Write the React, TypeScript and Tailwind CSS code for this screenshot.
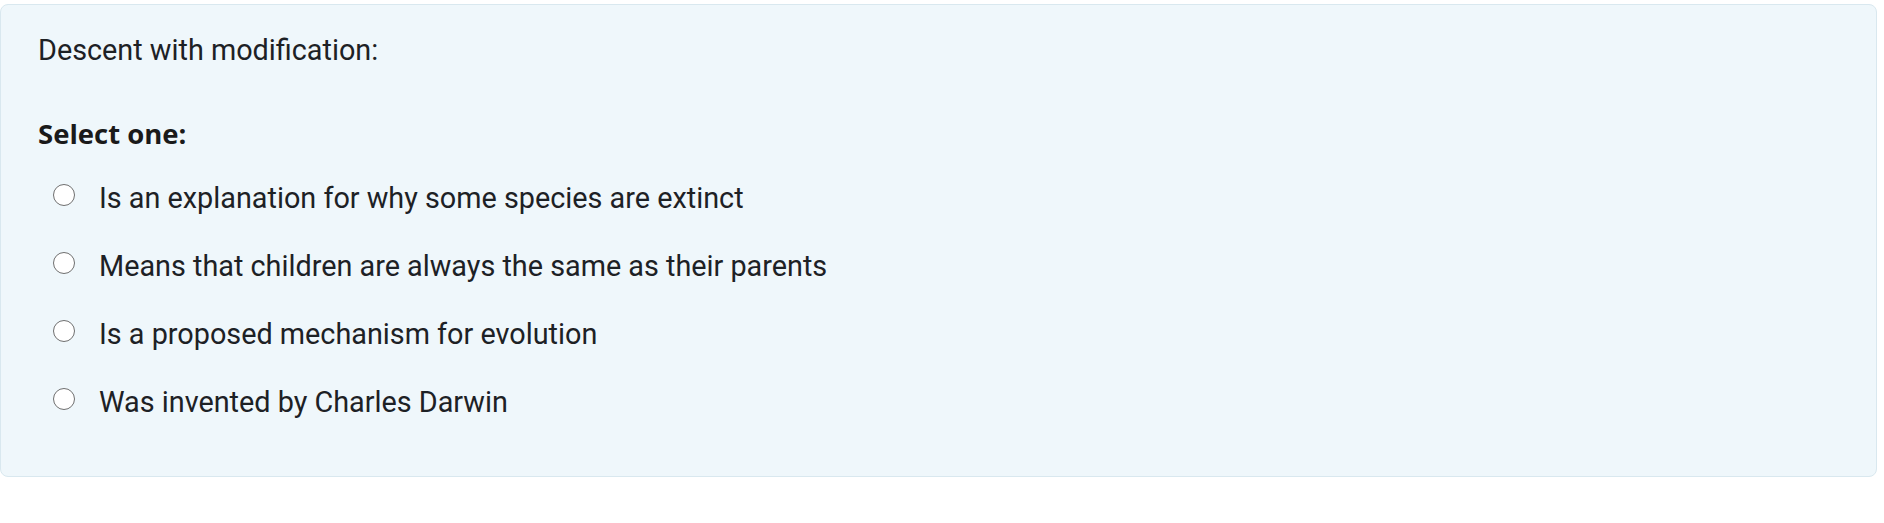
const options = [
  "Is an explanation for why some species are extinct",
  "Means that children are always the same as their parents",
  "Is a proposed mechanism for evolution",
  "Was invented by Charles Darwin",
];

export default function App() {
  return (
    <div className="min-h-screen bg-white pt-[4px]">
      <div className="w-[1877px] rounded-[8px] border border-[#d9e8ef] bg-[#eff7fb] pl-[37px] pt-[24px] pb-[53px] text-[#1d2125] font-['Roboto',sans-serif]">
        <p className="text-[28.8px] leading-[42px]">Descent with modification:</p>
        <p className="mt-[42px] text-[27.5px] leading-[42px] font-bold font-['Open_Sans',sans-serif] text-[#1a1a1a]">
          Select one:
        </p>
        <div className="mt-[22px] flex flex-col gap-[26px]">
          {options.map((o) => (
            <label key={o} className="flex items-center text-[28.8px] leading-[42px]">
              <span className="ml-[15px] mr-[24px] h-[22px] w-[22px] -translate-y-[3px] rounded-full border-[1.5px] border-[#6f6f6f] bg-white" />
              {o}
            </label>
          ))}
        </div>
      </div>
    </div>
  );
}
